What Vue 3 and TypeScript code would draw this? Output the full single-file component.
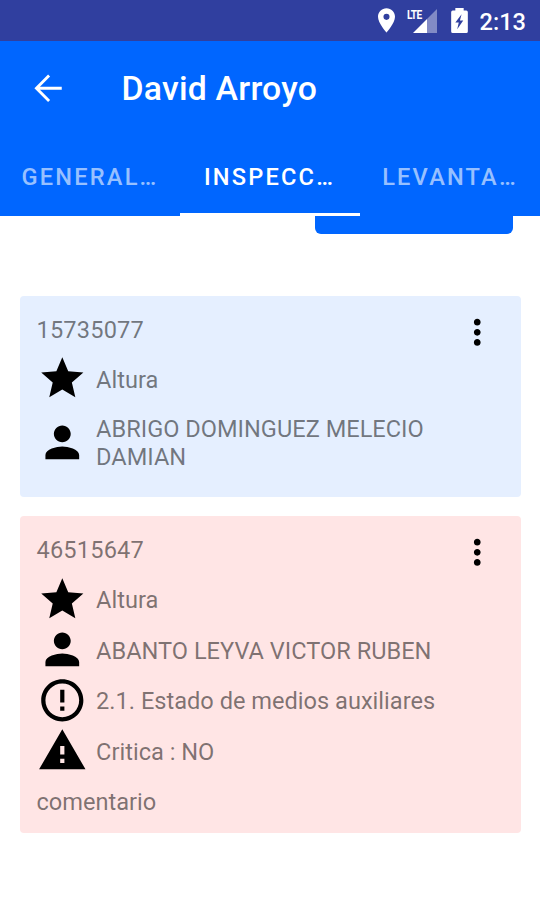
<script setup lang="ts">
type IconName = 'star' | 'person' | 'info' | 'warning'

interface Row {
  icon: IconName
  text: string
  tall?: boolean
}

interface Inspection {
  id: string
  tone: 'blue' | 'red'
  rows: Row[]
  comment?: string
}

const tabs = [
  { label: 'GENERAL…', active: false },
  { label: 'INSPECC…', active: true },
  { label: 'LEVANTA…', active: false },
]

const icons: Record<IconName, string> = {
  star: 'M12 17.27L18.18 21l-1.64-7.03L22 9.24l-7.19-.61L12 2 9.19 8.63 2 9.24l5.46 4.73L5.82 21z',
  person: 'M12 12c2.21 0 4-1.79 4-4s-1.79-4-4-4-4 1.79-4 4 1.79 4 4 4zm0 2c-2.67 0-8 1.34-8 4v2h16v-2c0-2.66-5.33-4-8-4z',
  info: 'M11 15h2v2h-2zm0-8h2v6h-2zm.99-5C6.47 2 2 6.48 2 12s4.47 10 9.99 10C17.52 22 22 17.52 22 12S17.52 2 11.99 2zM12 20c-4.42 0-8-3.58-8-8s3.58-8 8-8 8 3.58 8 8-3.58 8-8 8z',
  warning: 'M1 21h22L12 2 1 21zm12-3h-2v-2h2v2zm0-4h-2v-4h2v4z',
}

const inspections: Inspection[] = [
  {
    id: '15735077',
    tone: 'blue',
    rows: [
      { icon: 'star', text: 'Altura' },
      { icon: 'person', text: 'ABRIGO DOMINGUEZ MELECIO DAMIAN', tall: true },
    ],
  },
  {
    id: '46515647',
    tone: 'red',
    rows: [
      { icon: 'star', text: 'Altura' },
      { icon: 'person', text: 'ABANTO LEYVA VICTOR RUBEN' },
      { icon: 'info', text: '2.1. Estado de medios auxiliares' },
      { icon: 'warning', text: 'Critica : NO' },
    ],
    comment: 'comentario',
  },
]
</script>

<template>
  <div class="screen">
    <div class="status">
      <svg class="pin" viewBox="5 2 14 20"><path d="M12 2C8.13 2 5 5.13 5 9c0 5.25 7 13 7 13s7-7.75 7-13c0-3.87-3.13-7-7-7zm0 9.500a2.500 2.500 0 1 1 0-5 2.500 2.500 0 0 1 0 5z" /></svg>
      <div class="network">
        <svg class="signal" viewBox="0 0 24 24"><path d="M14 24H24V0L14 10z" opacity=".4" /><path d="M0 24H14V10z" /></svg>
        <span class="lte">LTE</span>
      </div>
      <svg class="battery" viewBox="0 0 16 24"><path fill-rule="evenodd" d="M1.500 2.500H4V0h8v2.500h2.500Q16 2.500 16 4v18.500Q16 24 14.500 24h-13Q0 24 0 22.500V4Q0 2.500 1.500 2.500zM10 6L4 14H7.300L5.800 20.300L11.600 12H8.400z" /></svg>
      <span class="time">2:13</span>
    </div>

    <header class="header">
      <div class="toolbar">
        <svg class="back" viewBox="0 0 24 24"><path d="M20 12H5M12.500 4.500L5 12L12.500 19.500" /></svg>
        <h1 class="title">David Arroyo</h1>
      </div>
      <nav class="tabs">
        <div v-for="tab in tabs" :key="tab.label" class="tab" :class="{ active: tab.active }">{{ tab.label }}</div>
      </nav>
    </header>

    <main class="content">
      <div class="button"></div>
      <article v-for="item in inspections" :key="item.id" class="card" :class="item.tone">
        <div class="card-head">
          <span class="id">{{ item.id }}</span>
          <svg class="more" viewBox="0 0 24 24"><path d="M12 8c1.100 0 2-.9 2-2s-.9-2-2-2-2 .9-2 2 .9 2 2 2zm0 2c-1.100 0-2 .9-2 2s.9 2 2 2 2-.9 2-2-.9-2-2-2zm0 6c-1.100 0-2 .9-2 2s.9 2 2 2 2-.9 2-2-.9-2-2-2z" /></svg>
        </div>
        <div v-for="row in item.rows" :key="row.icon" class="row" :class="{ tall: row.tall }">
          <svg class="icon" viewBox="0 0 24 24"><path :d="icons[row.icon]" /></svg>
          <span class="text">{{ row.text }}</span>
        </div>
        <div v-if="item.comment" class="comment">{{ item.comment }}</div>
      </article>
    </main>
  </div>
</template>

<style>
body {
  margin: 0;
  background: #fff;
}
</style>

<style scoped>
.screen {
  width: 540px;
  height: 900px;
  overflow: hidden;
  background: #fff;
  font-family: Roboto, "Liberation Sans", sans-serif;
}
.status {
  box-sizing: border-box;
  height: 41px;
  padding: 0 14px 0 0;
  display: flex;
  align-items: center;
  justify-content: flex-end;
  background: #303f9f;
  color: #fff;
}
.status svg {
  fill: #fff;
}
.pin {
  width: 17px;
  height: 25px;
  margin-right: 12px;
}
.network {
  position: relative;
  width: 30px;
  height: 26px;
  margin-right: 14px;
}
.signal {
  position: absolute;
  right: 0;
  bottom: 1px;
  width: 24px;
  height: 24px;
}
.lte {
  position: absolute;
  left: 0;
  top: 1px;
  font-size: 13px;
  line-height: 12px;
  font-weight: 700;
  letter-spacing: -0.8px;
  transform: scaleX(0.78);
  transform-origin: left;
}
.battery {
  width: 17px;
  height: 25px;
  margin-right: 12px;
}
.time {
  padding-top: 2px;
  font-size: 23.6px;
  font-weight: 500;
  line-height: 28px;
}
.header {
  height: 175px;
  background: #06f;
  color: #fff;
}
.toolbar {
  box-sizing: border-box;
  height: 94px;
  padding-left: 28px;
  display: flex;
  align-items: center;
}
.back {
  width: 40.5px;
  height: 40.5px;
  margin-right: 53px;
  fill: none;
  stroke: #fff;
  stroke-width: 1.7;
}
.title {
  margin: 0;
  padding-top: 2px;
  font-size: 33.75px;
  font-weight: 500;
  line-height: 40px;
  letter-spacing: 0.23px;
}
.tabs {
  height: 81px;
  display: grid;
  grid-template-columns: repeat(3, 1fr);
}
.tab {
  box-sizing: border-box;
  display: flex;
  align-items: center;
  justify-content: center;
  padding-top: 5px;
  border-bottom: 3px solid transparent;
  font-size: 23.6px;
  font-weight: 500;
  letter-spacing: 2.2px;
  color: rgba(255, 255, 255, 0.6);
}
.tab.active {
  padding-right: 1px;
  color: #fff;
  border-bottom-color: #fff;
}
.content {
  padding: 0 19.5px 0 20px;
  display: flex;
  flex-direction: column;
}
.button {
  align-self: flex-end;
  width: 198px;
  height: 18px;
  margin: 0 8px 61.5px 0;
  border-radius: 0 0 6px 6px;
  background: #06f;
}
.card {
  box-sizing: border-box;
  padding: 17px 17px 17px 16.500px;
  margin-bottom: 19px;
  border-radius: 4px;
  color: rgba(0, 0, 0, 0.52);
  font-size: 23.6px;
  line-height: 27.5px;
}
.blue {
  background: #e5efff;
}
.red {
  background: #ffe5e5;
}
.card-head {
  height: 40.5px;
  display: flex;
  align-items: flex-start;
  justify-content: space-between;
}
.id {
  padding-top: 4px;
  letter-spacing: 0.17px;
}
.more {
  width: 40.5px;
  height: 40.5px;
  margin: -0.7px 6px 0 0;
  fill: #000;
}
.row {
  height: 50.6px;
  display: flex;
  align-items: center;
  gap: 9px;
}
.row.tall {
  height: 76.5px;
}
.icon {
  flex: none;
  width: 50.6px;
  height: 50.6px;
  fill: #000;
}
.text {
  padding-top: 4px;
}
.comment {
  padding: 13.500px 0 0;
  margin-bottom: -0.5px;
}
</style>
